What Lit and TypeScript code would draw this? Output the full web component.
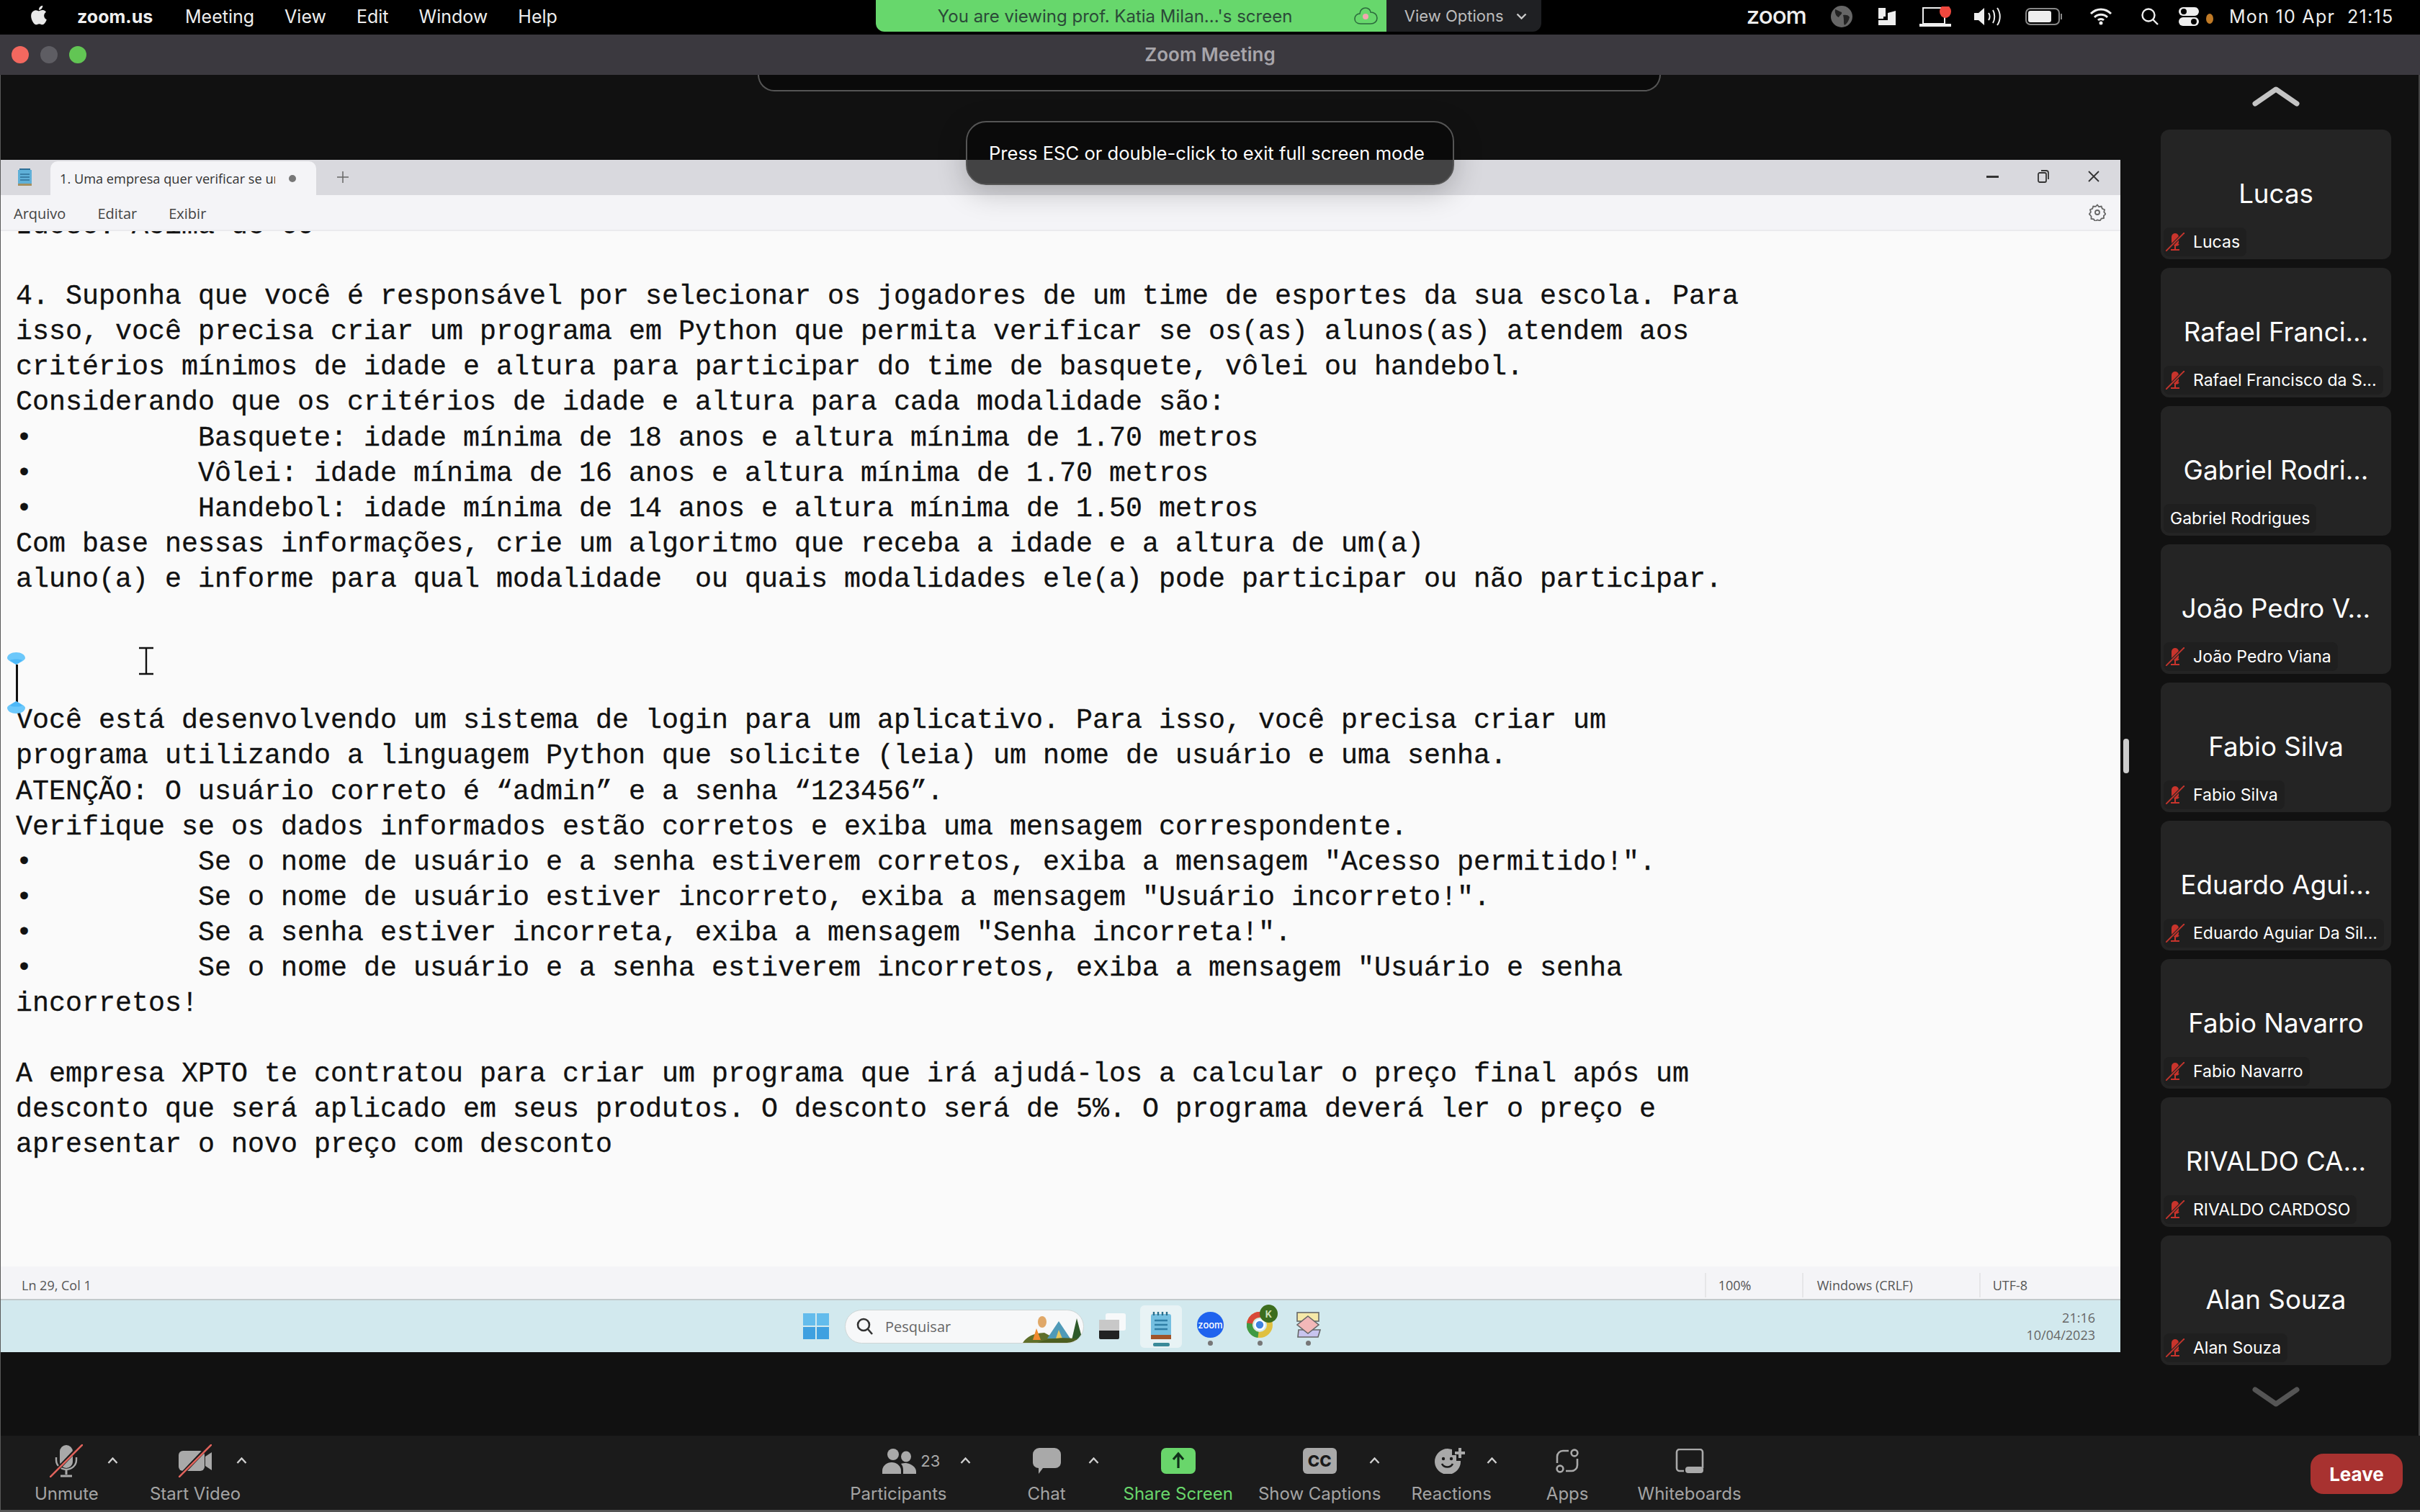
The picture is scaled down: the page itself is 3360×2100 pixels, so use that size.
import { LitElement, html, css, svg } from 'lit';
import { customElement } from 'lit/decorators.js';

const EDITOR_LINES = [
  'Idoso: Acima de 60',
  '',
  '4. Suponha que você é responsável por selecionar os jogadores de um time de esportes da sua escola. Para',
  'isso, você precisa criar um programa em Python que permita verificar se os(as) alunos(as) atendem aos',
  'critérios mínimos de idade e altura para participar do time de basquete, vôlei ou handebol.',
  'Considerando que os critérios de idade e altura para cada modalidade são:',
  '•          Basquete: idade mínima de 18 anos e altura mínima de 1.70 metros',
  '•          Vôlei: idade mínima de 16 anos e altura mínima de 1.70 metros',
  '•          Handebol: idade mínima de 14 anos e altura mínima de 1.50 metros',
  'Com base nessas informações, crie um algoritmo que receba a idade e a altura de um(a)',
  'aluno(a) e informe para qual modalidade  ou quais modalidades ele(a) pode participar ou não participar.',
  '',
  '',
  '',
  'Você está desenvolvendo um sistema de login para um aplicativo. Para isso, você precisa criar um',
  'programa utilizando a linguagem Python que solicite (leia) um nome de usuário e uma senha.',
  'ATENÇÃO: O usuário correto é “admin” e a senha “123456”.',
  'Verifique se os dados informados estão corretos e exiba uma mensagem correspondente.',
  '•          Se o nome de usuário e a senha estiverem corretos, exiba a mensagem "Acesso permitido!".',
  '•          Se o nome de usuário estiver incorreto, exiba a mensagem "Usuário incorreto!".',
  '•          Se a senha estiver incorreta, exiba a mensagem "Senha incorreta!".',
  '•          Se o nome de usuário e a senha estiverem incorretos, exiba a mensagem "Usuário e senha',
  'incorretos!',
  '',
  'A empresa XPTO te contratou para criar um programa que irá ajudá-los a calcular o preço final após um',
  'desconto que será aplicado em seus produtos. O desconto será de 5%. O programa deverá ler o preço e',
  'apresentar o novo preço com desconto',
];

const PARTICIPANTS = [
  { name: 'Lucas', label: 'Lucas', muted: true },
  { name: 'Rafael Franci...', label: 'Rafael Francisco da S...', muted: true },
  { name: 'Gabriel Rodri...', label: 'Gabriel Rodrigues', muted: false },
  { name: 'João Pedro V...', label: 'João Pedro Viana', muted: true },
  { name: 'Fabio Silva', label: 'Fabio Silva', muted: true },
  { name: 'Eduardo Agui...', label: 'Eduardo Aguiar Da Sil...', muted: true },
  { name: 'Fabio Navarro', label: 'Fabio Navarro', muted: true },
  { name: 'RIVALDO CA...', label: 'RIVALDO CARDOSO', muted: true },
  { name: 'Alan Souza', label: 'Alan Souza', muted: true },
];

const GREY = '#a9a9a9';

const appleIcon = svg`<svg width="32" height="32" viewBox="0 0 24 24" fill="#e8e8e8"><path d="M18.71 19.5c-.83 1.24-1.71 2.45-3.05 2.47-1.34.03-1.77-.79-3.29-.79-1.53 0-2 .77-3.27.82-1.31.05-2.3-1.32-3.14-2.53C4.25 17 2.94 12.45 4.7 9.39c.87-1.52 2.43-2.48 4.12-2.51 1.28-.02 2.5.87 3.29.87.78 0 2.26-1.07 3.8-.91.65.03 2.47.26 3.64 1.98-.09.06-2.17 1.28-2.15 3.81.03 3.02 2.65 4.03 2.68 4.04-.03.07-.42 1.44-1.38 2.83M13 3.5c.73-.83 1.94-1.46 2.94-1.5.13 1.17-.34 2.35-1.04 3.19-.69.85-1.83 1.51-2.95 1.42-.15-1.15.41-2.35 1.05-3.11z"/></svg>`;

const statusIcons = html`
  <svg class="st" style="margin-left:34px" width="30" height="32" viewBox="0 0 30 32"><circle cx="15" cy="16" r="15" fill="#666"/><path d="M6 6c4 1 5 3 9 4 1 3-3 4-4 7-3-1-6-5-5-11zM17 14c4-1 8 0 9 3-1 5-4 9-7 11-2-3 0-6-2-14z" fill="#222"/></svg>
  <svg class="st" style="margin-left:36px" width="24" height="24" viewBox="0 0 24 24" fill="#eee"><path d="M0 0h10v12h-3v3h-7zM13 7l11-3v20h-24v-7h13z"/></svg>
  <svg class="st" style="margin-left:32px" width="46" height="28" viewBox="0 0 46 28"><path d="M6 2h30v22h-30z" fill="none" stroke="#eee" stroke-width="2"/><path d="M1 24h44v4h-44z" fill="#eee"/><ellipse cx="37" cy="7" rx="8" ry="9" fill="#f0483e"/></svg>
  <svg class="st" style="margin-left:31px" width="38" height="26" viewBox="0 0 38 26" fill="none" stroke="#eee" stroke-width="2"><path d="M0 8h6l8-7v24l-8-7h-6z" fill="#eee" stroke="none"/><path d="M20 8c2 3 2 7 0 10M26 4c3 5 3 13 0 18M32 1c5 7 5 17 0 24"/></svg>
  <svg class="st" style="margin-left:33px" width="52" height="24" viewBox="0 0 52 24"><rect x="1" y="1" width="46" height="22" rx="6" fill="none" stroke="#888" stroke-width="2"/><rect x="4" y="4" width="32" height="16" rx="3" fill="#eee"/><rect x="49" y="8" width="2" height="8" fill="#888"/></svg>
  <svg class="st" style="margin-left:37px" width="32" height="24" viewBox="0 0 32 24" fill="none" stroke="#eee" stroke-width="3"><path d="M2 8c8-8 20-8 28 0M7 13c5-5 13-5 18 0M12 17c2-2 6-2 8 0"/><circle cx="16" cy="21" r="2.5" fill="#eee" stroke="none"/></svg>
  <svg class="st" style="margin-left:39px" width="26" height="24" viewBox="0 0 26 24" fill="none" stroke="#eee" stroke-width="2.4"><circle cx="11" cy="10" r="8.5"/><path d="M17 16l7 7"/></svg>
  <svg class="st" style="margin-left:27px" width="28" height="26" viewBox="0 0 28 26"><rect x="0" y="0" width="28" height="12" rx="6" fill="#eee"/><circle cx="7" cy="6" r="4" fill="#000"/><rect x="0" y="14" width="28" height="12" rx="6" fill="#eee"/><circle cx="21" cy="20" r="4" fill="#000"/></svg>
  <span class="orange-dot"></span>
`;

// red mic in the participant labels
const mutedMic = svg`<svg class="mic" width="26" height="26" viewBox="0 0 26 26"><rect x="8" y="1" width="10" height="17" rx="5" fill="#c9342c"/><path d="M13 18v5M7 24h12" stroke="#c9342c" stroke-width="2"/><path d="M9 14c1 4 7 5 9 2" stroke="#c9342c" stroke-width="2" fill="none"/><path d="M25 1L1 25" stroke="#242424" stroke-width="4"/><path d="M26 0L0 26" stroke="#c9342c" stroke-width="1.8"/></svg>`;

const slash = svg`<path d="M48 0L4 46" stroke="#1b1b1b" stroke-width="5" transform="translate(-3 -1)"/><path d="M46 0L0 46" stroke="#e0635c" stroke-width="2.6" stroke-linecap="round"/>`;

const toolbarIcons: Record<string, unknown> = {
  mic: svg`<svg width="46" height="46" viewBox="0 0 46 46"><rect x="14" y="1" width="18" height="32" rx="9" fill="${GREY}"/><path d="M9 18v4a14 13 0 0 0 28 0v-4" fill="none" stroke="${GREY}" stroke-width="2.4"/><path d="M23 35v7M15 44h16" stroke="${GREY}" stroke-width="3"/>${slash}</svg>`,
  video: svg`<svg width="46" height="46" viewBox="0 0 46 46"><rect x="0" y="9" width="36" height="28" rx="6" fill="${GREY}"/><path d="M37 17l9-6v25l-9-6z" fill="${GREY}"/>${slash}</svg>`,
  people: svg`<svg width="47" height="35" viewBox="0 0 47 35" fill="${GREY}"><ellipse cx="15" cy="8" rx="8" ry="8"/><path d="M0 35v-4c0-7 6-12 13-12s13 5 13 12v4z"/><ellipse cx="33" cy="11" rx="7" ry="7.5"/><path d="M29 35v-5c0-4-1-7-3-9 2-1 5-1 7-1 8 1 14 6 14 12v3z"/></svg>`,
  chat: svg`<svg width="39" height="36" viewBox="0 0 39 36" fill="${GREY}"><path d="M9 0h21a9 9 0 0 1 9 9v11a8 8 0 0 1-8 8h-17l-6 8v-8a8 8 0 0 1-8-8v-11a9 9 0 0 1 9-9z"/></svg>`,
  share: svg`<svg width="48" height="36" viewBox="0 0 48 36"><rect width="48" height="36" rx="7" fill="#69d66b"/><path d="M24 28V9M17 16l7-8 7 8" fill="none" stroke="#10301a" stroke-width="3.2"/></svg>`,
  react: svg`<svg width="46" height="36" viewBox="0 0 46 36"><path d="M18 1a18 18 0 1 0 18 17h-6v-8h-6v-8z" fill="${GREY}"/><circle cx="12" cy="15" r="2.2" fill="#1b1b1b"/><circle cx="23" cy="15" r="2.2" fill="#1b1b1b"/><path d="M10 22c3 6 12 6 15 0" fill="none" stroke="#1b1b1b" stroke-width="2.6"/><path d="M35 0v14M28 7h14" stroke="${GREY}" stroke-width="4"/></svg>`,
  apps: svg`<svg width="32" height="34" viewBox="0 0 32 34" fill="none" stroke="${GREY}" stroke-width="2.6"><path d="M18 3h-8a8 8 0 0 0-8 8v9"/><path d="M14 31h8a8 8 0 0 0 8-8v-9"/><circle cx="26" cy="6" r="4.4"/><circle cx="6" cy="28" r="4.4"/></svg>`,
  board: svg`<svg width="40" height="34" viewBox="0 0 40 34"><path d="M6 1h28a4 4 0 0 1 4 4v22" fill="none" stroke="${GREY}" stroke-width="2.6"/><path d="M2 5v22a4 4 0 0 0 4 4h6M6 1a4 4 0 0 0-4 4" fill="none" stroke="${GREY}" stroke-width="2.6"/><rect x="14" y="25" width="25" height="9" rx="4" fill="${GREY}"/></svg>`,
};

const caret = svg`<svg width="15" height="9" viewBox="0 0 15 9"><path d="M1.5 8L7.5 1.5L13.5 8" fill="none" stroke="#cfcfcf" stroke-width="2.4"/></svg>`;

interface ToolItem {
  label: string;
  icon: string;
  gap: number;
  caret?: number;
  extra?: string;
}

const LEFT_TOOLS: ToolItem[] = [
  { label: 'Unmute', icon: 'mic', gap: 71, caret: 64 },
  { label: 'Start Video', icon: 'video', gap: 0, caret: 64 },
];

const CENTER_TOOLS: ToolItem[] = [
  { label: 'Participants', icon: 'people', gap: 112, caret: 93, extra: 'participants' },
  { label: 'Chat', icon: 'chat', gap: 80, caret: 65 },
  { label: 'Share Screen', icon: 'share', gap: 35, extra: 'green' },
  { label: 'Show Captions', icon: 'cc', gap: 42, caret: 76 },
  { label: 'Reactions', icon: 'react', gap: 76, caret: 56 },
  { label: 'Apps', icon: 'apps', gap: 68 },
  { label: 'Whiteboards', icon: 'board', gap: 0 },
];

@customElement('app-root')
export class AppRoot extends LitElement {
  static styles = css`
    :host {
      display: block;
      width: 3360px;
      height: 2100px;
      overflow: hidden;
      position: relative;
      background: #111;
      font-family: Inter, 'Liberation Sans', sans-serif;
    }
    svg { display: block; flex: none; }

    /* mac menu bar */
    .menubar {
      height: 48px;
      box-sizing: border-box;
      padding-bottom: 2px;
      background: #000;
      color: #eee;
      display: flex;
      align-items: center;
      font-size: 25px;
      position: relative;
    }
    .apple { margin: -4px 0 0 38px; }
    .app-name { font-weight: 700; margin-left: 37px; width: 150px; }
    .menu-item { margin-right: 42px; }
    .share-tab {
      display: flex;
      margin-left: 400px;
      height: 44px;
      align-self: flex-start;
    }
    .viewing {
      width: 709px;
      background: #67d76c;
      border-radius: 0 0 0 12px;
      color: #2b4a38;
      font-size: 24px;
      display: flex;
      align-items: center;
      padding-left: 86px;
      box-sizing: border-box;
      position: relative;
    }
    .cloud { margin-left: 86px; }
    .view-options {
      width: 215px;
      background: #1f2023;
      border-radius: 0 0 12px 0;
      color: #bdbdbd;
      font-size: 22px;
      display: flex;
      align-items: center;
      padding-left: 25px;
      box-sizing: border-box;
      gap: 17px;
    }
    .zoom-word {
      margin-left: 285px;
      font-size: 33px;
      font-weight: 500;
      letter-spacing: -1px;
      line-height: 1;
      margin-top: -4px;
    }
    .st { flex: none; }
    .orange-dot {
      width: 10px;
      height: 14px;
      border-radius: 50%;
      background: #c07a26;
      margin: 6px 0 0 10px;
    }
    .clock { margin-left: 22px; font-size: 25px; letter-spacing: 1.3px; white-space: pre; }

    /* zoom window title */
    .titlebar {
      height: 56px;
      box-sizing: border-box;
      padding-bottom: 2px;
      background: #3b393f;
      display: flex;
      align-items: center;
      justify-content: center;
      position: relative;
      color: #a7a5aa;
      font-weight: 600;
      font-size: 26px;
    }
    .lights {
      position: absolute;
      left: 16px;
      top: 16px;
      display: flex;
      gap: 16px;
    }
    .lights span { width: 24px; height: 24px; border-radius: 50%; }

    .main {
      height: 1890px;
      display: flex;
      border-left: 1px solid #5a5a5a;
      border-right: 2px solid #444;
      box-sizing: border-box;
    }
    .share-area { width: 2943px; flex: none; }
    .notch {
      margin-left: 1051px;
      width: 1254px;
      height: 23px;
      box-sizing: border-box;
      background: #0a0a0a;
      border: 2px solid #555;
      border-top: 0;
      border-radius: 0 0 24px 24px;
    }
    .window {
      margin-top: 95px;
      height: 1656px;
      display: flex;
      flex-direction: column;
      font-family: 'Open Sans', 'Noto Sans', sans-serif;
    }

    .tabbar {
      height: 49px;
      flex: none;
      background: #d9d9de;
      display: flex;
      align-items: flex-end;
      position: relative;
    }
    .note-icon { margin: 0 26px 13px 24px; }
    .tab {
      width: 369px;
      height: 47px;
      box-sizing: border-box;
      background: #f4f4f7;
      border-radius: 10px 10px 0 0;
      display: flex;
      align-items: center;
      padding-left: 13px;
      color: #333;
      font-size: 18.2px;
      white-space: nowrap;
      overflow: hidden;
    }
    .tab-title { width: 299px; overflow: hidden; flex: none; }
    .tab-dot { width: 10px; height: 10px; border-radius: 50%; background: #777; margin-left: 19px; flex: none; }
    .plus { margin: 0 0 17px 29px; }
    .win-controls {
      margin-left: auto;
      display: flex;
      align-items: center;
      padding-right: 29px;
      gap: 54px;
      align-self: flex-start;
      height: 46px;
    }

    .menu-row {
      height: 50px;
      flex: none;
      box-sizing: border-box;
      background: #f4f4f7;
      border-bottom: 2px solid #ebebee;
      display: flex;
      align-items: center;
      padding: 2px 20px 0 18px;
      font-size: 20px;
      color: #444;
      gap: 44px;
    }
    .gear { margin-left: auto; margin-top: -2px; }

    .editor {
      flex: none;
      height: 1438px;
      background: #fafafa;
      overflow: hidden;
      position: relative;
    }
    .text {
      margin: -31px 0 0 21px;
      font-family: 'Liberation Mono', monospace;
      font-size: 38.33px;
      line-height: 49.1px;
      color: #111;
      white-space: pre;
      -webkit-text-stroke: 0.3px #111;
    }
    .caret-line { position: absolute; left: 21px; top: 602px; width: 3px; height: 52px; background: #111; }
    .handle { position: absolute; left: 9px; width: 25px; height: 17px; }
    .handle.flip { transform: rotate(180deg); }
    .ibeam { position: absolute; left: 190px; top: 577px; }

    .statusbar {
      height: 47px;
      flex: none;
      box-sizing: border-box;
      background: #f4f4f7;
      border-bottom: 2px solid #c2c9cb;
      display: flex;
      align-items: center;
      font-size: 18px;
      color: #555;
      position: relative;
      padding-top: 6px;
    }
    .status-pos { margin-left: 29px; }
    .status-cell {
      height: 34px;
      display: flex;
      align-items: center;
      border-left: 2px solid #e6e6e8;
      box-sizing: border-box;
    }

    .taskbar {
      flex: 1;
      background: #d2e9ee;
      display: flex;
      align-items: center;
      position: relative;
    }
    .win-logo {
      margin-left: 1114px;
      display: grid;
      grid-template-columns: 17px 17px;
      grid-auto-rows: 17px;
      gap: 2px;
    }
    .win-logo span { background: #3fa0e0; }
    .win-logo span:nth-child(-n + 2) { background: #63bcec; }
    .search {
      margin-left: 22px;
      width: 332px;
      height: 47px;
      border-radius: 24px;
      background: #f7f8f9;
      border: 1px solid #cfd6d6;
      box-sizing: border-box;
      display: flex;
      align-items: center;
      padding-left: 15px;
      font-size: 20px;
      color: #666;
      gap: 17px;
      position: relative;
      overflow: hidden;
    }
    .camp { position: absolute; right: 0; bottom: 0; }
    .task-app { flex: none; }
    .task-active {
      width: 58px;
      height: 59px;
      background: #e8f3f5;
      border-radius: 6px;
      display: flex;
      flex-direction: column;
      align-items: center;
      padding-top: 9px;
      box-sizing: border-box;
      margin-left: 20px;
    }
    .task-active i { display: block; width: 23px; height: 5px; border-radius: 2px; background: #3a8a99; margin-top: 5px; }
    .task-col { display: flex; flex-direction: column; align-items: center; gap: 4px; padding-top: 7px; position: relative; }
    .task-col i { display: block; width: 7px; height: 7px; border-radius: 50%; background: #777; }
    .zoom-app {
      width: 37px;
      height: 36px;
      background: #1f63ee;
      border-radius: 50%;
      color: #fff;
      font: 500 13px Inter, sans-serif;
      display: flex;
      align-items: center;
      justify-content: center;
    }
    .k-badge {
      position: absolute;
      left: 18px;
      top: -3px;
      width: 25px;
      height: 25px;
      border-radius: 50%;
      background: #3c6e1e;
      color: #cde0b8;
      font: 700 13px Inter, sans-serif;
      display: flex;
      align-items: center;
      justify-content: center;
    }
    .tray-clock {
      margin-left: auto;
      padding-right: 35px;
      text-align: right;
      font-size: 18px;
      line-height: 24px;
      color: #666;
    }

    /* toast overlay */
    .toast {
      position: absolute;
      left: 1341px;
      top: 168px;
      width: 678px;
      height: 89px;
      box-sizing: border-box;
      border: 2px solid #555;
      border-radius: 28px;
      background: rgba(8, 8, 8, 0.72);
      box-shadow: 0 10px 40px rgba(0, 0, 0, 0.22);
      color: #fff;
      font-size: 25.6px;
      display: flex;
      align-items: center;
      justify-content: center;
      padding-right: 9px;
    }
    .handle-bar {
      position: absolute;
      left: 2948px;
      top: 1026px;
      width: 8px;
      height: 48px;
      border-radius: 4px;
      background: #ccc;
    }

    /* gallery */
    .sidebar {
      flex: 1;
      display: flex;
      flex-direction: column;
      align-items: center;
      padding: 16px 38px 0 56px;
      box-sizing: border-box;
    }
    .cards { display: flex; flex-direction: column; gap: 12px; margin: 32px 0 30px; }
    .card {
      width: 320px;
      height: 180px;
      border-radius: 12px;
      background: #242424;
      box-sizing: border-box;
      display: flex;
      flex-direction: column;
      align-items: stretch;
      padding: 4px;
    }
    .card-name {
      flex: 1;
      display: flex;
      align-items: center;
      justify-content: center;
      color: #fff;
      font-size: 36.7px;
      white-space: nowrap;
      padding-top: 36px;
    }
    .name-tag {
      height: 40px;
      align-self: flex-start;
      display: flex;
      align-items: center;
      gap: 12px;
      background: #1f1f1f;
      border-radius: 8px;
      padding: 0 9px 0 3px;
      color: #fff;
      font-size: 23px;
      white-space: nowrap;
      box-sizing: border-box;
    }
    .name-tag.plain { padding-left: 9px; }

    /* toolbar */
    .toolbar {
      height: 106px;
      box-sizing: border-box;
      background: #1b1b1b;
      border-left: 1px solid #5a5a5a;
      border-bottom: 3px solid #555;
      display: flex;
      padding: 12px 24px 0 47px;
    }
    .tool {
      display: flex;
      flex-direction: column;
      align-items: center;
      flex: none;
      position: relative;
    }
    .tool-icon {
      height: 46px;
      display: flex;
      align-items: center;
      gap: 6px;
      color: #a9a9a9;
      font-size: 22px;
    }
    .tool.participants .tool-icon { margin-left: 36px; }
    .tool-label { margin-top: 8px; line-height: 30px; font-size: 24px; color: #a4a4a4; white-space: nowrap; }
    .tool.green .tool-label { color: #69d66b; }
    .tool-caret { position: absolute; top: 18px; margin-left: -7px; }
    .cc {
      width: 47px;
      height: 36px;
      border-radius: 6px;
      background: #a9a9a9;
      color: #1b1b1b;
      font-size: 22px;
      font-weight: 800;
      display: flex;
      align-items: center;
      justify-content: center;
    }
    .center-tools { display: flex; margin-left: 846px; }
    .leave {
      margin: 13px 0 0 auto;
      width: 128px;
      height: 56px;
      border-radius: 18px;
      background: #a83230;
      color: #fff;
      font-weight: 700;
      font-size: 26px;
      display: flex;
      align-items: center;
      justify-content: center;
    }
  `;

  private renderTool(t: ToolItem) {
    const icon = t.icon === 'cc' ? html`<div class="cc">CC</div>` : toolbarIcons[t.icon];
    return html`
      <div class="tool ${t.extra ?? ''}" style="margin-right:${t.gap}px">
        <div class="tool-icon">${icon}${t.icon === 'people' ? html`<span>23</span>` : ''}</div>
        <div class="tool-label">${t.label}</div>
        ${t.caret ? html`<div class="tool-caret" style="left:calc(50% + ${t.caret}px)">${caret}</div>` : ''}
      </div>
    `;
  }

  private renderTaskbar() {
    return html`
      <div class="taskbar">
        <div class="win-logo"><span></span><span></span><span></span><span></span></div>
        <div class="search">
          <svg width="23" height="24" viewBox="0 0 23 24" fill="none" stroke="#333" stroke-width="2.6"><circle cx="10" cy="10" r="8"/><path d="M16 16l6 7"/></svg>
          <span>Pesquisar</span>
          <svg class="camp" width="84" height="40" viewBox="0 0 84 40">
            <ellipse cx="27" cy="11" rx="6" ry="8" fill="#e0a868"/>
            <path d="M0 40c6-9 14-13 30-14l26 14z" fill="#5f6f2a"/>
            <path d="M34 34l16-24 16 24z" fill="#4f9ab8"/>
            <path d="M46 34l4-12 5 12z" fill="#e8c860"/>
            <path d="M14 36l5-16 6 16z" fill="#f08a30"/>
            <path d="M75 6l-7 30h15z" fill="#2f5a2a"/>
            <path d="M20 40c20-8 44-8 64-4v4z" fill="#4c5e20"/>
          </svg>
        </div>
        <svg class="task-app" style="margin-left:21px" width="37" height="36" viewBox="0 0 37 36"><rect x="9" y="0" width="28" height="24" rx="3" fill="#f7f9fa"/><rect x="0" y="9" width="28" height="27" rx="2" fill="#222"/><rect x="0" y="9" width="28" height="15" fill="#c8c8c8"/></svg>
        <div class="task-active">
          <svg width="28" height="38" viewBox="0 0 28 38"><rect x="0" y="3" width="28" height="32" rx="3" fill="#74bfe0"/><path d="M5 12h18M5 18h18M5 24h18" stroke="#2f7fa6" stroke-width="2.6"/><path d="M4 0v5M10 0v5M16 0v5M22 0v5" stroke="#2c6f8c" stroke-width="2.4"/><rect x="0" y="32" width="28" height="6" fill="#a0552a"/></svg>
          <i></i>
        </div>
        <div class="task-col" style="margin-left:21px"><div class="zoom-app">zoom</div><i></i></div>
        <div class="task-col" style="margin-left:32px">
          <svg width="36" height="36" viewBox="0 0 36 36"><circle cx="18" cy="18" r="14" fill="none" stroke="#e0c040" stroke-width="8"/><path d="M4 18a14 14 0 0 1 24-10" fill="none" stroke="#d8483a" stroke-width="8"/><path d="M4 16a14 14 0 0 0 12 16" fill="none" stroke="#3f9a44" stroke-width="8"/><circle cx="18" cy="18" r="6.5" fill="#3f83e0" stroke="#fff" stroke-width="2.5"/></svg>
          <i></i>
          <div class="k-badge">K</div>
        </div>
        <div class="task-col" style="margin-left:31px">
          <svg width="36" height="36" viewBox="0 0 36 36" stroke="#666" stroke-width="1.6"><rect x="3" y="1" width="30" height="12" fill="#f5e8a8"/><path d="M5 25h30l-3 10h-28z" fill="#c8c4ee"/><path d="M18 6l15 12-15 12-15-12z" fill="#f2b8b8"/></svg>
          <i></i>
        </div>
        <div class="tray-clock">21:16<br />10/04/2023</div>
      </div>
    `;
  }

  render() {
    const handleDrop = svg`<svg viewBox="0 0 25 17" width="25" height="17"><path d="M0 8C0 3 6 0 12.500 0S25 3 25 8C25 11 16 15 12.500 17C9 15 0 11 0 8z" fill="#6cc8fb"/><path d="M4 11C8 9 17 9 21 11C18 14 15 15.500 12.500 17C10 15.500 7 14 4 11z" fill="#4db8f8"/></svg>`;
    return html`
      <div class="menubar">
        <div class="apple">${appleIcon}</div>
        <span class="app-name">zoom.us</span>
        <span class="menu-item">Meeting</span>
        <span class="menu-item">View</span>
        <span class="menu-item">Edit</span>
        <span class="menu-item">Window</span>
        <span class="menu-item">Help</span>
        <div class="share-tab">
          <div class="viewing">
            <span>You are viewing prof. Katia Milan...'s screen</span>
            <svg class="cloud" width="33" height="24" viewBox="0 0 33 24"><path d="M16 1c4 0 7 3 7 6 5 0 9 3 9 8s-4 8-9 8h-14c-5 0-8-3-8-7s3-7 7-7c0-5 4-8 8-8z" fill="none" stroke="#2b6a3c" stroke-width="1.6"/><ellipse cx="16" cy="13" rx="4" ry="4" fill="#f2a7b0"/></svg>
          </div>
          <div class="view-options">
            <span>View Options</span>
            <svg width="15" height="9" viewBox="0 0 15 9"><path d="M1.500 1.500L7.500 7.500L13.500 1.500" fill="none" stroke="#ccc" stroke-width="2.400"/></svg>
          </div>
        </div>
        <span class="zoom-word">zoom</span>
        ${statusIcons}
        <span class="clock">Mon 10 Apr  21:15</span>
      </div>

      <div class="titlebar">
        <div class="lights">
          <span style="background:#f2685f"></span>
          <span style="background:#5e5d63"></span>
          <span style="background:#62c554"></span>
        </div>
        Zoom Meeting
      </div>

      <div class="main">
        <div class="share-area">
          <div class="notch"></div>
          <div class="window">
            <div class="tabbar">
              <svg class="note-icon" width="19" height="24" viewBox="0 0 19 24"><rect y="2" width="19" height="20" fill="#5fb0d8"/><path d="M3 8h13M3 12h13M3 16h13" stroke="#2f6f96" stroke-width="1.600"/><path d="M2 0h15v2h-15z" fill="#2f6f96"/><rect y="21" width="19" height="3" fill="#a59060"/></svg>
              <div class="tab">
                <span class="tab-title">1. Uma empresa quer verificar se um</span>
                <span class="tab-dot"></span>
              </div>
              <svg class="plus" width="16" height="16" viewBox="0 0 16 16"><path d="M8 0v16M0 8h16" stroke="#666" stroke-width="1.500"/></svg>
              <div class="win-controls">
                <svg width="17" height="3" viewBox="0 0 17 3"><rect width="17" height="3" fill="#333"/></svg>
                <svg width="16" height="18" viewBox="0 0 16 18" fill="none" stroke="#333" stroke-width="1.800"><rect x="1" y="4" width="11" height="13" rx="2"/><path d="M5 1h7a3 3 0 0 1 3 3v9"/></svg>
                <svg width="16" height="16" viewBox="0 0 16 16"><path d="M1 1l14 14M15 1l-14 14" stroke="#333" stroke-width="1.800"/></svg>
              </div>
            </div>
            <div class="menu-row">
              <span>Arquivo</span><span>Editar</span><span>Exibir</span>
              <svg class="gear" width="24" height="24" viewBox="0 0 24 24" fill="none" stroke="#666" stroke-width="1.800"><circle cx="12" cy="12" r="3"/><path d="M12 1.500l2.200 2.700 3.400-.6 1.200 3.300 3.200 1.300-.7 3.400 2.200 2.700-2.600 2.300.1 3.400-3.400.6-1.900 2.900-3.700-1.100-3 1.800-2.100-2.800-3.400-.4.100-3.500L.9 14.300l2-2.700-.9-3.300 3.200-1.500L6.300 3.500l3.400.4z"/></svg>
            </div>
            <div class="editor">
              <div class="text">${EDITOR_LINES.map((l) => html`<div>${l || ' '}</div>`)}</div>
              <div class="handle" style="top:585px">${handleDrop}</div>
              <div class="caret-line"></div>
              <div class="handle flip" style="top:653px">${handleDrop}</div>
              <svg class="ibeam" width="24" height="40" viewBox="0 0 24 40" fill="none" stroke="#111" stroke-width="2.400"><path d="M2 2h20M12 2v36M2 38h20"/></svg>
            </div>
            <div class="statusbar">
              <span class="status-pos">Ln 29, Col 1</span>
              <div class="status-cell" style="margin-left:2240px;width:135px;padding-left:17px">100%</div>
              <div class="status-cell" style="width:246px;padding-left:19px">Windows (CRLF)</div>
              <div class="status-cell" style="padding-left:17px">UTF-8</div>
            </div>
            ${this.renderTaskbar()}
          </div>
        </div>

        <div class="sidebar">
          <svg width="66" height="28" viewBox="0 0 66 28"><path d="M4 24L33 4L62 24" fill="none" stroke="#c4c4c4" stroke-width="7" stroke-linecap="round" stroke-linejoin="round"/></svg>
          <div class="cards">
            ${PARTICIPANTS.map(
              (p) => html`
                <div class="card">
                  <div class="card-name">${p.name}</div>
                  <div class="name-tag ${p.muted ? '' : 'plain'}">${p.muted ? mutedMic : ''}<span>${p.label}</span></div>
                </div>
              `,
            )}
          </div>
          <svg width="66" height="28" viewBox="0 0 66 28"><path d="M4 4L33 24L62 4" fill="none" stroke="#555" stroke-width="7" stroke-linecap="round" stroke-linejoin="round"/></svg>
        </div>
      </div>

      <div class="toolbar">
        ${LEFT_TOOLS.map((t) => this.renderTool(t))}
        <div class="center-tools">${CENTER_TOOLS.map((t) => this.renderTool(t))}</div>
        <div class="leave">Leave</div>
      </div>

      <div class="toast">Press ESC or double-click to exit full screen mode</div>
      <div class="handle-bar"></div>
    `;
  }
}
